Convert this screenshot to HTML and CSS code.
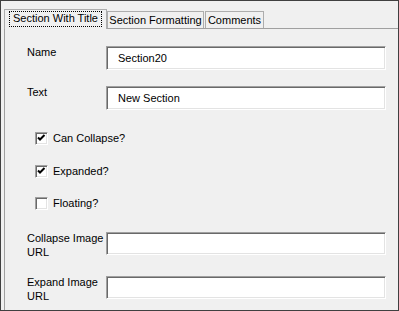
FILE: index.html
```html
<!DOCTYPE html>
<html>
<head>
<meta charset="utf-8">
<link rel="stylesheet" href="styles.css">
</head>
<body>
<div class="window">
  <div class="tabs">
    <div class="tab tab-active"><span class="focus">Section With Title</span></div>
    <div class="tab tab-fmt">Section Formatting</div>
    <div class="tab tab-comments">Comments</div>
  </div>
  <div class="panel">
    <div class="row row-name">
      <label class="lbl">Name</label>
      <div class="field">Section20</div>
    </div>
    <div class="row row-text">
      <label class="lbl">Text</label>
      <div class="field">New Section</div>
    </div>
    <div class="check check-1">
      <span class="box"><svg width="13" height="13" viewBox="0 0 13 13"><path d="M3 5.5 L5 7.5 L9.5 3" fill="none" stroke="#000" stroke-width="2"/></svg></span>
      <span class="ctext">Can Collapse?</span>
    </div>
    <div class="check check-2">
      <span class="box"><svg width="13" height="13" viewBox="0 0 13 13"><path d="M3 5.5 L5 7.5 L9.5 3" fill="none" stroke="#000" stroke-width="2"/></svg></span>
      <span class="ctext">Expanded?</span>
    </div>
    <div class="check check-3">
      <span class="box"></span>
      <span class="ctext">Floating?</span>
    </div>
    <div class="row row-collapse">
      <label class="lbl">Collapse Image<br>URL</label>
      <div class="field field-url"></div>
    </div>
    <div class="row row-expand">
      <label class="lbl">Expand Image<br>URL</label>
      <div class="field field-url"></div>
    </div>
  </div>
</div>
</body>
</html>
```
FILE: styles.css
```css
html, body {
  margin: 0;
  padding: 0;
  background: #f0f0f0;
}
body {
  font-family: "Liberation Sans", Arial, sans-serif;
  font-size: 11px;
  color: #000;
}
.window {
  width: 399px;
  height: 311px;
  box-sizing: border-box;
  border: 1px solid #404040;
  background: #f0f0f0;
  padding: 8px 0 0 3px;
  display: flex;
  flex-direction: column;
  overflow: hidden;
}
.tabs {
  display: flex;
  align-items: flex-end;
  height: 19px;
  position: relative;
  z-index: 2;
}
.tab {
  box-sizing: border-box;
  border: 1px solid #adadad;
  border-bottom: none;
  background: #f0f0f0;
  height: 17px;
  display: flex;
  align-items: center;
  justify-content: center;
  white-space: nowrap;
  line-height: 13px;
  padding-top: 1px;
}
.tab-active {
  width: 103px;
  height: 20px;
  margin-bottom: -1px;
  padding: 1px 4px 2px 4px;
  align-items: stretch;
}
.focus {
  flex: 1;
  border: 1px dotted #000;
  display: flex;
  align-items: center;
  justify-content: center;
  padding-bottom: 1px;
}
.tab-fmt {
  width: 97px;
}
.tab-comments {
  width: 59px;
  margin-left: 1px;
}
.panel {
  flex: 1;
  border-top: 1px solid #a0a0a0;
  border-left: 1px solid #a0a0a0;
  padding: 17px 0 0 22px;
  display: flex;
  flex-direction: column;
}
.row {
  display: flex;
  align-items: flex-start;
}
.lbl {
  width: 79px;
  line-height: 14px;
  margin-top: -1px;
}
.field {
  box-sizing: border-box;
  width: 280px;
  height: 24px;
  background: #fff;
  border: 1px solid;
  border-color: #a0a0a0 #fff #fff #a0a0a0;
  box-shadow: inset 1px 1px 0 #696969, inset -1px -1px 0 #e3e3e3;
  padding: 0 0 0 11px;
  line-height: 22px;
}
.field-url {
  height: 23px;
}
.row-text {
  margin-top: 16px;
}
.check {
  display: flex;
  align-items: center;
  padding-left: 8px;
  height: 13px;
}
.check-1 { margin-top: 22px; }
.check-2 { margin-top: 20px; }
.check-3 { margin-top: 19px; }
.box {
  box-sizing: border-box;
  width: 13px;
  height: 13px;
  background: #fff;
  border: 1px solid;
  border-color: #a0a0a0 #fff #fff #a0a0a0;
  box-shadow: inset 1px 1px 0 #696969, inset -1px -1px 0 #e3e3e3;
  position: relative;
  flex: none;
}
.box svg {
  position: absolute;
  left: -1px;
  top: -1px;
}
.ctext {
  margin-left: 5px;
  line-height: 13px;
}
.row-collapse { margin-top: 22px; }
.row-expand { margin-top: 17px; }
```
